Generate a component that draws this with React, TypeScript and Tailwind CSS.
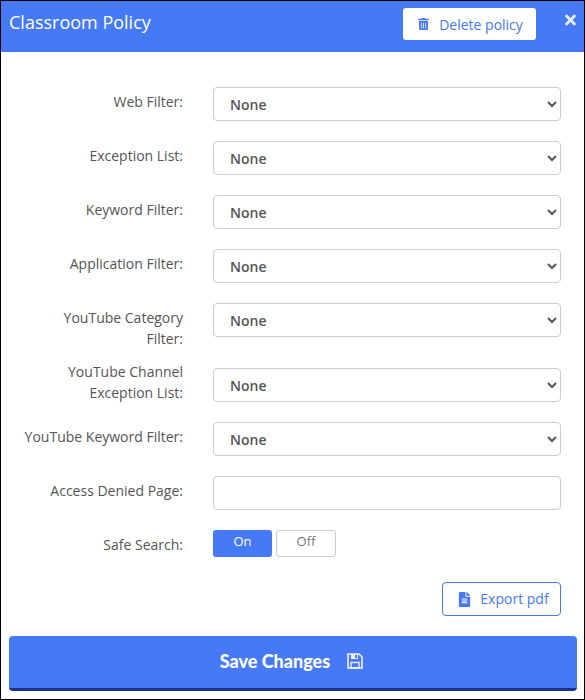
import { FaTrashAlt, FaTimes, FaFileAlt } from 'react-icons/fa';

const filters = [
  { label: 'Web Filter:' },
  { label: 'Exception List:' },
  { label: 'Keyword Filter:' },
  { label: 'Application Filter:' },
];

function FilterSelect() {
  return (
    <select className="w-[348px] h-[34px] shrink-0 rounded-[4px] border border-[#ccc] bg-white pl-[12px] text-[14px] font-semibold text-[#555] outline-none">
      <option>None</option>
    </select>
  );
}

function Label({ children, className = '' }: { children: React.ReactNode; className?: string }) {
  return (
    <label className={`w-[182px] mr-[30px] shrink-0 text-right text-[14px] leading-[21px] text-[#555] ${className}`}>
      {children}
    </label>
  );
}

function SaveIcon() {
  return (
    <svg viewBox="0 0 16 16" className="h-[16px] w-[16px]" fill="none">
      <path d="M1 1H12L15 4V15H1Z" stroke="#fff" strokeWidth="1.6" opacity="0.9" />
      <path d="M4 1H11V6H4Z M8 2V5H10V2Z" fill="#fff" fillRule="evenodd" opacity="0.9" />
      <rect x="4" y="9.5" width="8" height="5.5" stroke="#fff" strokeWidth="1.4" opacity="0.9" />
    </svg>
  );
}

export default function App() {
  return (
    <div className="w-[585px] h-[700px] overflow-hidden border border-black bg-white font-['Open_Sans',sans-serif]">
      <div className="flex h-[51px] items-start bg-[#4679f5]">
        <h4 className="ml-[8px] mt-[8px] text-[18px] leading-[26px] text-white">Classroom Policy</h4>
        <button className="ml-auto mt-[7px] flex h-[32px] w-[133px] items-center justify-center gap-[10px] rounded-[3px] bg-white pl-[2px] text-[14px] text-[#4679f5]">
          <FaTrashAlt className="h-[12px] w-[11px]" />
          Delete policy
        </button>
        <button className="ml-[28px] mr-[7px] mt-[11px] text-white/85">
          <FaTimes className="h-[16px] w-[13px]" />
        </button>
      </div>

      <form className="flex flex-col pt-[35px]">
        {filters.map((f) => (
          <div key={f.label} className="mb-[20px] flex">
            <Label className="pt-[4px]">{f.label}</Label>
            <FilterSelect />
          </div>
        ))}
        <div className="mb-[20px] flex h-[45px]">
          <Label className="pt-[4px]">YouTube Category<br />Filter:</Label>
          <FilterSelect />
        </div>
        <div className="mb-[20px] flex h-[34px]">
          <Label className="mt-[-7px]">YouTube Channel<br />Exception List:</Label>
          <FilterSelect />
        </div>
        <div className="mb-[20px] flex">
          <Label className="pt-[4px]">YouTube Keyword Filter:</Label>
          <FilterSelect />
        </div>
        <div className="mb-[20px] flex">
          <Label className="pt-[4px]">Access Denied Page:</Label>
          <input className="h-[34px] w-[348px] shrink-0 rounded-[4px] border border-[#ccc] bg-white outline-none" />
        </div>
        <div className="flex">
          <Label className="pt-[4px]">Safe Search:</Label>
          <div className="flex gap-[4px]">
            <button type="button" className="h-[27px] w-[59px] rounded-[3px] bg-[#4679f5] pb-[4px] text-[13px] text-white">On</button>
            <button type="button" className="h-[27px] w-[60px] rounded-[3px] border border-[#ccc] bg-white pb-[4px] text-[13px] text-[#777]">Off</button>
          </div>
        </div>
        <div className="mt-[25px] flex justify-end pr-[23px]">
          <button type="button" className="flex h-[34px] w-[119px] items-center justify-center gap-[9px] rounded-[4px] border border-[#4679f5] bg-white pb-[2px] pl-[4px] text-[14px] text-[#4679f5]">
            <FaFileAlt className="mt-[2px] h-[15px] w-[13px]" />
            Export pdf
          </button>
        </div>
        <div className="mt-[20px] px-[8px]">
          <button type="button" className="flex h-[55px] w-[568px] items-center justify-center gap-[17px] rounded-[4px] border-b-[3px] border-[#1e2f8f] bg-[#4679f5] pb-[2px] pr-[3px] font-['Lato',sans-serif] text-[18px] font-black text-white">
            Save Changes
            <SaveIcon />
          </button>
        </div>
      </form>
    </div>
  );
}
